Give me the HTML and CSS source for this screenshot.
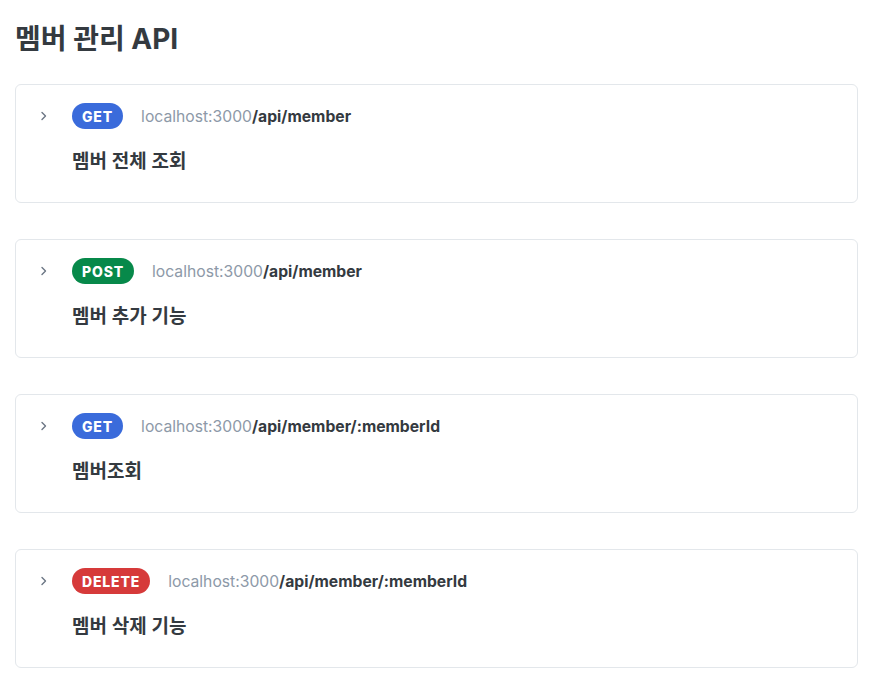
FILE: index.html
```html
<!DOCTYPE html>
<html lang="ko">
<head>
    <meta charset="UTF-8">
    <meta name="viewport" content="width=device-width, initial-scale=1.0">
    <title>멤버 관리 API</title>
    <link rel="stylesheet" href="styles.css">
</head>
<body>
    <div class="api-page">
        <h1 class="page-title">멤버 관리 API</h1>

        <div class="endpoint-list">
            <div class="endpoint">
                <div class="endpoint-head">
                    <span class="toggle">
                        <svg viewBox="0 0 16 16" width="16" height="16"><path d="M6 4.5 9.5 8 6 11.5" /></svg>
                    </span>
                    <span class="method method-get">GET</span>
                    <span class="url"><span class="host">localhost:3000</span><span class="path">/api/member</span></span>
                </div>
                <p class="summary">멤버 전체 조회</p>
            </div>

            <div class="endpoint">
                <div class="endpoint-head">
                    <span class="toggle">
                        <svg viewBox="0 0 16 16" width="16" height="16"><path d="M6 4.5 9.5 8 6 11.5" /></svg>
                    </span>
                    <span class="method method-post">POST</span>
                    <span class="url"><span class="host">localhost:3000</span><span class="path">/api/member</span></span>
                </div>
                <p class="summary">멤버 추가 기능</p>
            </div>

            <div class="endpoint">
                <div class="endpoint-head">
                    <span class="toggle">
                        <svg viewBox="0 0 16 16" width="16" height="16"><path d="M6 4.5 9.5 8 6 11.5" /></svg>
                    </span>
                    <span class="method method-get">GET</span>
                    <span class="url"><span class="host">localhost:3000</span><span class="path">/api/member/:memberId</span></span>
                </div>
                <p class="summary">멤버조회</p>
            </div>

            <div class="endpoint">
                <div class="endpoint-head">
                    <span class="toggle">
                        <svg viewBox="0 0 16 16" width="16" height="16"><path d="M6 4.5 9.5 8 6 11.5" /></svg>
                    </span>
                    <span class="method method-delete">DELETE</span>
                    <span class="url"><span class="host">localhost:3000</span><span class="path">/api/member/:memberId</span></span>
                </div>
                <p class="summary">멤버 삭제 기능</p>
            </div>
        </div>
    </div>
</body>
</html>
```

FILE: styles.css
```css
:root {
    --text-color: #343a40;
    --muted-color: #8d99a8;
    --border-color: #e3e7eb;
    --get-color: #3a6bdb;
    --post-color: #07894a;
    --delete-color: #d63a3a;
}

* {
    margin: 0;
    padding: 0;
    box-sizing: border-box;
}

body {
    font-family: Inter, 'Noto Sans CJK KR', sans-serif;
    background: #ffffff;
    color: var(--text-color);
}

.api-page {
    padding: 22px 15px 20px;
}

.page-title {
    font-size: 28px;
    font-weight: 700;
    line-height: 34px;
    margin-bottom: 28px;
    color: var(--text-color);
}

.endpoint-list {
    display: flex;
    flex-direction: column;
    gap: 36px;
}

.endpoint {
    border: 1px solid var(--border-color);
    border-radius: 6px;
    padding: 18px 20px 28px;
}

.endpoint-head {
    display: flex;
    align-items: center;
    height: 26px;
}

.toggle {
    display: flex;
    width: 16px;
    height: 16px;
    margin-right: 20px;
}

.toggle svg {
    fill: none;
    stroke: #6b7684;
    stroke-width: 1.4;
    stroke-linecap: round;
    stroke-linejoin: round;
}

.method {
    display: inline-flex;
    align-items: center;
    height: 26px;
    padding: 0 10px;
    border-radius: 13px;
    color: #ffffff;
    font-size: 14px;
    font-weight: 800;
    letter-spacing: 0.06em;
    margin-right: 18px;
}

.method-get { background: var(--get-color); }
.method-post { background: var(--post-color); }
.method-delete { background: var(--delete-color); }

.url {
    font-size: 15.7px;
}

.host {
    color: var(--muted-color);
}

.path {
    font-weight: 700;
    color: var(--text-color);
}

.summary {
    margin-top: 21px;
    margin-left: 36px;
    font-size: 19px;
    font-weight: 600;
    line-height: 24px;
}
```
